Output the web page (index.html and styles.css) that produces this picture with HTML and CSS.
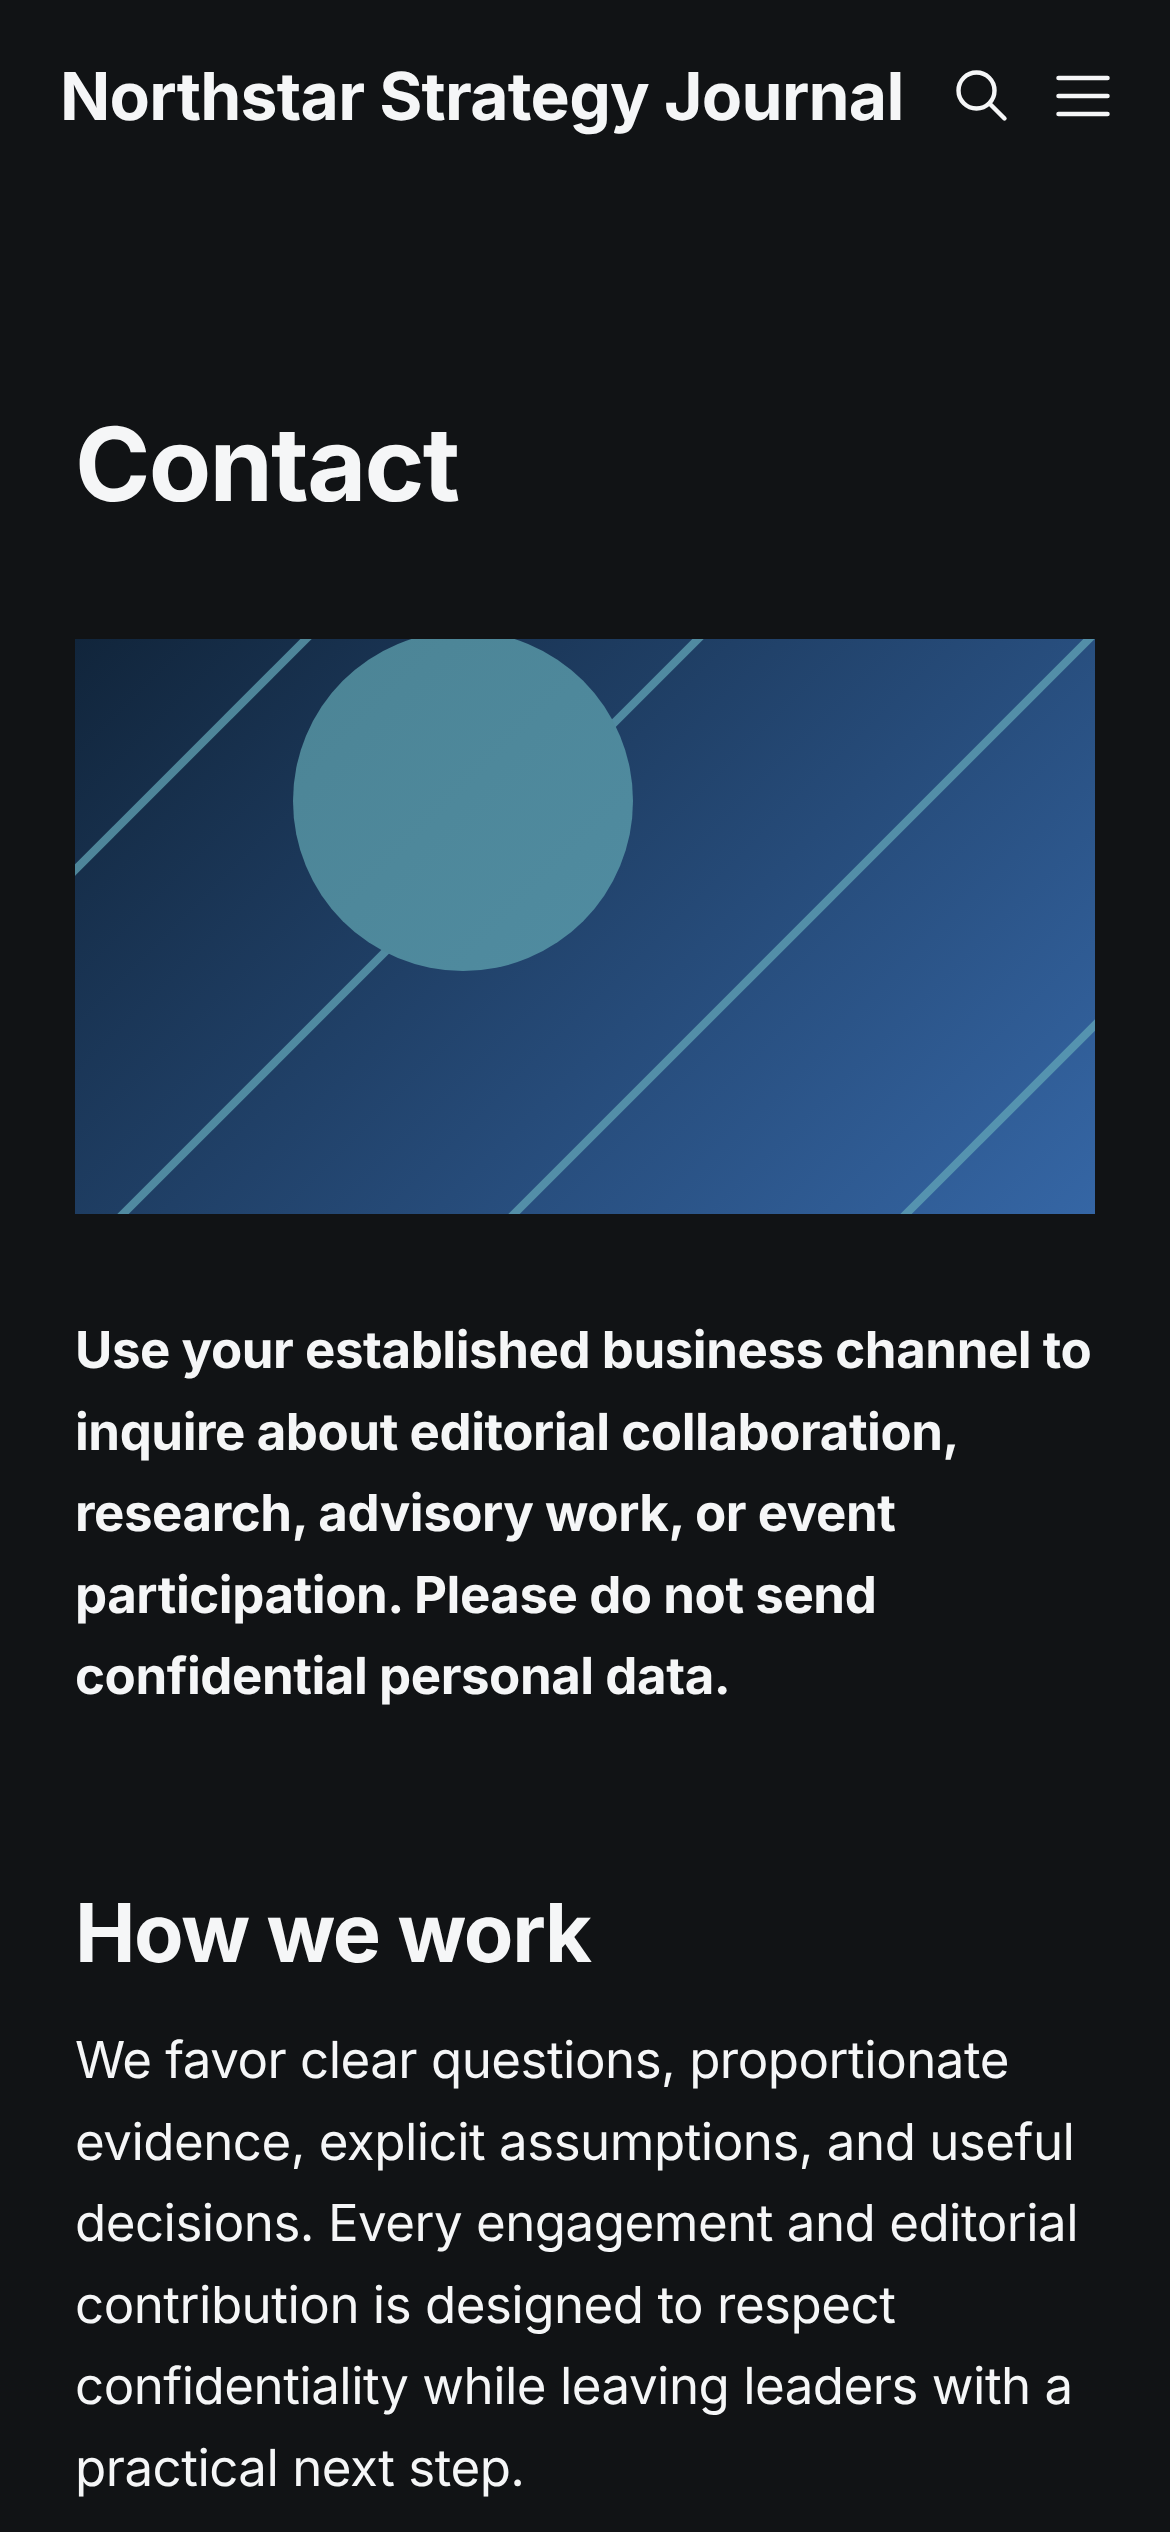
FILE: index.html
```html
<!DOCTYPE html>
<html>
<head>
    <title>Contact - Northstar Strategy Journal</title>
    <link rel="stylesheet" href="styles.css">
</head>
<body>
    <header class="site-header">
        <div class="site-title">Northstar Strategy Journal</div>
        <div class="header-icons">
            <svg class="icon-search" width="54" height="54" viewBox="0 0 54 54" fill="none" stroke="#f5f6f7" stroke-width="4.4" stroke-linecap="round">
                <circle cx="21.5" cy="21.5" r="18"/>
                <line x1="34.5" y1="34.5" x2="49.5" y2="49.5"/>
            </svg>
            <svg class="icon-menu" width="54" height="46" viewBox="0 0 54 46" fill="none" stroke="#f5f6f7" stroke-width="4.5" stroke-linecap="round">
                <line x1="2.5" y1="5" x2="51.5" y2="5"/>
                <line x1="2.5" y1="23" x2="51.5" y2="23"/>
                <line x1="2.5" y1="41" x2="51.5" y2="41"/>
            </svg>
        </div>
    </header>

    <main class="content">
        <h1>Contact</h1>

        <svg class="hero" viewBox="0 0 1020 575">
            <defs>
                <linearGradient id="hero-bg" gradientUnits="userSpaceOnUse" x1="111" y1="-111" x2="909" y2="687">
                    <stop offset="0" stop-color="#11253b"/>
                    <stop offset="1" stop-color="#3566a5"/>
                </linearGradient>
                <linearGradient id="hero-circle" x1="0" y1="0" x2="1" y2="1">
                    <stop offset="0" stop-color="#4c8495"/>
                    <stop offset="1" stop-color="#508ca1"/>
                </linearGradient>
            </defs>
            <rect width="1020" height="575" fill="url(#hero-bg)"/>
            <g stroke="#64a8b8" stroke-opacity="0.72" stroke-width="8">
                <line x1="-100" y1="331" x2="331" y2="-100"/>
                <line x1="-100" y1="723" x2="723" y2="-100"/>
                <line x1="-100" y1="1114" x2="1114" y2="-100"/>
                <line x1="731" y1="675" x2="1120" y2="286"/>
            </g>
            <circle cx="388" cy="162" r="170" fill="url(#hero-circle)"/>
        </svg>

        <p class="lead">Use your established business channel to inquire about editorial collaboration, research, advisory work, or event participation. Please do not send confidential personal data.</p>

        <h2>How we work</h2>
        <p class="body-text">We favor clear questions, proportionate evidence, explicit assumptions, and useful decisions. Every engagement and editorial contribution is designed to respect confidentiality while leaving leaders with a practical next step.</p>
    </main>
</body>
</html>
```

FILE: styles.css
```css
body {
    margin: 0;
    background-color: #111315;
    color: #f5f6f7;
    font-family: Inter, "Noto Sans", sans-serif;
    text-rendering: geometricPrecision;
    overflow: hidden;
}
.site-header {
    display: flex;
    align-items: center;
    justify-content: space-between;
    padding: 57px 60px 0 60px;
}
.site-title {
    font-size: 66px;
    font-weight: 700;
    line-height: 78px;
    letter-spacing: -0.75px;
    white-space: nowrap;
}
.header-icons {
    display: flex;
    align-items: center;
    gap: 47px;
}
.content {
    padding: 0 75px;
}
h1 {
    margin: 268px 0 0 0;
    font-size: 102px;
    font-weight: 700;
    line-height: 122px;
    letter-spacing: -1.8px;
}
.hero {
    display: block;
    width: 1020px;
    height: 575px;
    margin-top: 114px;
}
.lead {
    margin: 96px 0 0 0;
    font-size: 51px;
    font-weight: 700;
    line-height: 81.6px;
    letter-spacing: -0.45px;
}
h2 {
    margin: 167px 0 0 0;
    font-size: 81px;
    font-weight: 700;
    line-height: 97px;
    letter-spacing: -1.4px;
}
.body-text {
    margin: 38px 0 0 0;
    font-size: 51px;
    font-weight: 400;
    line-height: 81.6px;
    letter-spacing: -0.5px;
}
```
